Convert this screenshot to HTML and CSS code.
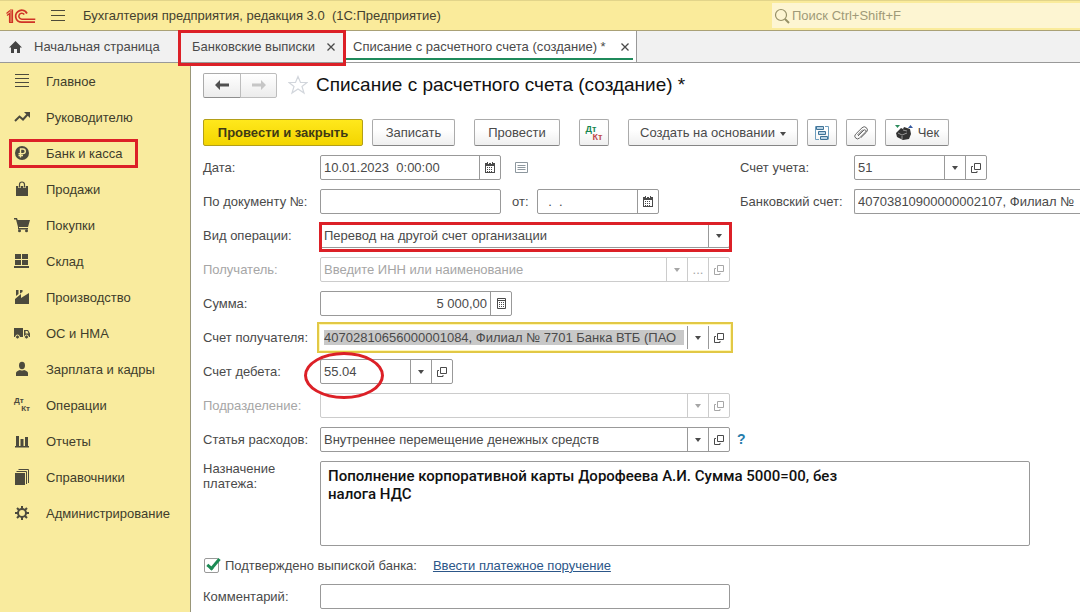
FILE: index.html
```html
<!DOCTYPE html>
<html lang="ru">
<head>
<meta charset="utf-8">
<meta name="viewport" content="width=device-width, initial-scale=1">
<title>Списание с расчетного счета (создание) *</title>
<link rel="stylesheet" href="styles.css">
</head>
<body>
<svg class="sprite" aria-hidden="true">
  <symbol id="arrow" viewBox="0 0 6 4"><path d="M0 0h6L3 4z" fill="currentColor"/></symbol>
  <symbol id="open" viewBox="0 0 10 10"><path d="M3.5.5h6v6h-6zM2 3.500H.5v6h5.500V8" fill="none" stroke="currentColor"/></symbol>
  <symbol id="calendar" viewBox="0 0 10 11"><path d="M0 1h10v10H0z" fill="currentColor"/><path d="M1 4h8v6H1z" fill="#fff"/><path d="M2 0h1v2H2zM7 0h1v2H7z" fill="currentColor"/><path d="M2 5.500h6M2 7.500h6M2 9.500h6" stroke="currentColor" stroke-dasharray="1 1"/><path d="M3.500 0v2M6.500 0v2" stroke="#fff"/></symbol>
  <symbol id="close" viewBox="0 0 8 8"><path d="M.5.5l7 7m0-7l-7 7" stroke="currentColor" stroke-width="1.300"/></symbol>
</svg>

<header class="topbar">
  <svg class="logo" viewBox="0 0 30 16" role="img" aria-label="1С"><g fill="none" stroke="#cf3327"><path d="M.5 5.500L4 2.500M1 7.500l2.500-2V14M4 2h2.500v12.500H3M5 3v11" stroke-width="1.200"/><path d="M21 5.500a6 6 0 1 0-5 8.700h13" stroke-width="1.800"/><path d="M18.300 6.500a3 3 0 1 0-2.500 4.700h13.500" stroke-width="1.500"/></g></svg>
  <button class="plain menu" aria-label="Меню"><svg width="14" height="12" viewBox="0 0 14 12"><path d="M0 .5h14M0 5.500h14M0 10.500h14" stroke="#4d4a39"/></svg></button>
  <span class="app-name">Бухгалтерия предприятия, редакция 3.0&nbsp; (1С:Предприятие)</span>
  <label class="search">
    <svg width="16" height="16" viewBox="0 0 16 16"><circle cx="7" cy="7" r="5.500" fill="none" stroke="#969067" stroke-width="1.200"/><path d="M11 11l4 4" stroke="#969067" stroke-width="2"/></svg>
    <input type="search" placeholder="Поиск Ctrl+Shift+F" aria-label="Поиск">
  </label>
</header>

<nav class="tabs" aria-label="Открытые окна">
  <a class="tab home" href="#"><svg width="13" height="12" viewBox="0 0 13 12"><path d="M6.500 0L13 6.500h-2V12H8V8H5v4H2V6.500H0z" fill="#444"/></svg>Начальная страница</a>
  <div class="tab marked"><a href="#">Банковские выписки</a><button class="plain" aria-label="Закрыть"><svg width="8" height="8"><use href="#close"/></svg></button></div>
  <div class="tab active"><a href="#">Списание с расчетного счета (создание) *</a><button class="plain" aria-label="Закрыть"><svg width="8" height="8"><use href="#close"/></svg></button></div>
</nav>

<div class="workspace">
  <nav class="sidebar" aria-label="Разделы">
    <a href="#"><svg viewBox="0 0 16 16"><path d="M1 1.500h14M1 5.500h14M1 9.500h14M1 13.500h14" stroke="currentColor"/></svg>Главное</a>
    <a href="#"><svg viewBox="0 0 16 16"><path d="M1 12l4.500-4.500 3.500 3L14 5" fill="none" stroke="currentColor" stroke-width="2"/><path d="M10 3h6v6z" fill="currentColor"/></svg>Руководителю</a>
    <a href="#" class="marked"><svg viewBox="0 0 16 16"><circle cx="8" cy="8" r="7" fill="currentColor"/><path d="M6.500 12.500V4h2.500a2.300 2.300 0 0 1 0 4.600H4.500M4.500 10.500H9" fill="none" stroke="#f9eb9e" stroke-width="1.400"/></svg>Банк и касса</a>
    <a href="#"><svg viewBox="0 0 16 16"><path d="M2 5h12v10H2z" fill="currentColor"/><path d="M5.500 7V3.500a2.500 2.500 0 0 1 5 0V7" fill="none" stroke="#f9eb9e" stroke-width="2.500"/><path d="M5.500 6.500v-3a2.500 2.500 0 0 1 5 0v3" fill="none" stroke="currentColor" stroke-width="1.200"/></svg>Продажи</a>
    <a href="#"><svg viewBox="0 0 16 16"><path d="M0 1h3l.7 2H16l-2 7H5v1h9v1.500H4V10L2 2.500H0z" fill="currentColor"/><circle cx="5.500" cy="13.700" r="1.500" fill="currentColor"/><circle cx="12.500" cy="13.700" r="1.500" fill="currentColor"/></svg>Покупки</a>
    <a href="#"><svg viewBox="0 0 16 16"><path d="M1 1h6v5H1zM8 1h6v5H8zM1 7h6v5H1zM8 7h6v5H8zM0 13h15v2H0z" fill="currentColor"/></svg>Склад</a>
    <a href="#"><svg viewBox="0 0 16 16"><path d="M1 15V10l6-5v4l8-5v11zM2 1h2.500v4L2 7zM6 1h2.500v2L6 4.500z" fill="currentColor"/></svg>Производство</a>
    <a href="#"><svg viewBox="0 0 16 16"><path d="M0 3h9v9H0zM10 5h4l2 3.500V12h-6z" fill="currentColor"/><path d="M11.500 6h2l1 2.500h-3z" fill="#f9eb9e"/><g fill="currentColor" stroke="#f9eb9e"><circle cx="3.500" cy="12" r="2"/><circle cx="12.500" cy="12" r="2"/></g></svg>ОС и НМА</a>
    <a href="#"><svg viewBox="0 0 16 16"><ellipse cx="8" cy="4.500" rx="3" ry="3.700" fill="currentColor"/><path d="M2 15v-3c0-1.500 2-2.500 4-3q2 1.200 4 0c2 .5 4 1.500 4 3v3z" fill="currentColor"/></svg>Зарплата и кадры</a>
    <a href="#"><span class="dtkt" aria-hidden="true"><b>Дт</b><b>Кт</b></span>Операции</a>
    <a href="#"><svg viewBox="0 0 16 16"><path d="M2 3h3v10H2zM6.500 6h3v7h-3zM11 4h3v9h-3zM1 13h14v1.500H1z" fill="currentColor"/></svg>Отчеты</a>
    <a href="#"><svg viewBox="0 0 16 16"><path d="M1 4h10v12H1z" fill="currentColor"/><path d="M2.500 2.500h10V15M4.500.5h10V14" fill="none" stroke="currentColor"/></svg>Справочники</a>
    <a href="#"><svg viewBox="0 0 16 16"><circle cx="8" cy="8" r="4" fill="none" stroke="currentColor" stroke-width="2"/><path d="M8 1v3M8 12v3M1 8h3M12 8h3M3 3l2 2M11 11l2 2M13 3l-2 2M5 11l-2 2" stroke="currentColor" stroke-width="2"/></svg>Администрирование</a>
  </nav>

  <main class="content">
    <div class="heading">
      <div class="history">
        <button aria-label="Назад"><svg width="14" height="10" viewBox="0 0 14 10"><path d="M5 0v3.500h9v3H5V10L0 5z" fill="#505050"/></svg></button><button aria-label="Вперед" disabled><svg width="14" height="10" viewBox="0 0 14 10"><path d="M9 0v3.500H0v3h9V10l5-5z" fill="#c6c6c6"/></svg></button>
      </div>
      <button class="plain" aria-label="В избранное"><svg width="20" height="20" viewBox="0 0 20 20"><path d="M10 1.500l2.500 6H19l-5 4 2 6.500-6-4-6 4 2-6.500-5-4h6.500z" fill="none" stroke="#d2d6dc" stroke-width="1.200"/></svg></button>
      <h1>Списание с расчетного счета (создание) *</h1>
    </div>

    <div class="toolbar">
      <div class="group">
        <button class="btn primary">Провести и закрыть</button>
        <button class="btn save">Записать</button>
      </div>
      <button class="btn post">Провести</button>
      <button class="btn icon" aria-label="Показать проводки"><span class="dtkt colored"><b>Дт</b><b>Кт</b></span></button>
      <div class="group">
        <button class="btn create">Создать на основании<svg width="6" height="4"><use href="#arrow"/></svg></button>
        <button class="btn icon" aria-label="Структура подчиненности"><svg width="16" height="16" viewBox="0 0 16 16"><path d="M5 1.500H1.500v13H5M11 1.500h3.500v13" fill="none" stroke="#6d9dbd"/><g fill="#b9d3e5" stroke="#3f7296"><path d="M2.500 1.500h7v3h-7zM4.500 6.500h7v3h-7zM6.500 11.500h7v3h-7z"/></g></svg></button>
        <button class="btn icon" aria-label="Присоединенные файлы"><svg width="14" height="14" viewBox="0 0 14 14"><path d="M4 10l6-6a1.300 1.300 0 0 1 1.800 1.800L5.500 12A2.700 2.700 0 0 1 1.600 8.200L8 1.800a3 3 0 0 1 4.500 4.300L7 11.500M3.500 9L9 3.500" fill="none" stroke="#666"/></svg></button>
        <button class="btn check"><svg width="18" height="16" viewBox="0 0 18 16"><path d="M0 0h5L2.500 3z" fill="#2c8b5c"/><path d="M13 3h5l-2.500-3z" fill="#33579e"/><path d="M1 8l5-5 2 1 1-2 6 2 1 5-2 5-6 1-6-3z" fill="#333"/><path d="M3 8l4 2 5-2M8 5l4 1M7 11v3" fill="none" stroke="#999"/></svg>Чек</button>
      </div>
    </div>

    <form class="form">
      <div class="row">
        <div class="left">
          <label class="label" for="date">Дата:</label>
          <div class="field w-date"><input id="date" value="10.01.2023&nbsp; 0:00:00"><button type="button" aria-label="Календарь"><svg width="10" height="11"><use href="#calendar"/></svg></button></div>
          <button type="button" class="plain note" aria-label="Список"><svg width="13" height="11" viewBox="0 0 13 11"><path d="M.5.5h12v10H.5zM2.500 3.500h8M2.500 5.500h8M2.500 7.500h8" fill="none" stroke="#8d979e"/></svg></button>
        </div>
        <div class="right">
          <label class="label" for="account">Счет учета:</label>
          <div class="field w-code"><input id="account" value="51"><button type="button" aria-label="Выбрать"><svg width="6" height="4"><use href="#arrow"/></svg></button><button type="button" aria-label="Открыть"><svg width="10" height="10"><use href="#open"/></svg></button></div>
        </div>
      </div>
      <div class="row">
        <div class="left">
          <label class="label" for="number">По документу №:</label>
          <div class="field w-date"><input id="number"></div>
          <label class="from" for="docdate">от:</label>
          <div class="field w-from"><input id="docdate" value="&nbsp;&nbsp;.&nbsp;&nbsp;."><button type="button" aria-label="Календарь"><svg width="10" height="11"><use href="#calendar"/></svg></button></div>
        </div>
        <div class="right">
          <label class="label" for="bank">Банковский счет:</label>
          <div class="field bleed"><input id="bank" value="40703810900000002107, Филиал №"></div>
        </div>
      </div>
      <div class="row">
        <label class="label" for="kind">Вид операции:</label>
        <div class="field w-full marked"><select id="kind"><option>Перевод на другой счет организации</option></select><span class="seg" aria-hidden="true"><svg width="6" height="4"><use href="#arrow"/></svg></span></div>
      </div>
      <div class="row off">
        <label class="label" for="payee">Получатель:</label>
        <div class="field w-full"><input id="payee" placeholder="Введите ИНН или наименование" disabled><button type="button" aria-label="Выбрать" disabled><svg width="6" height="4"><use href="#arrow"/></svg></button><button type="button" disabled>...</button><button type="button" aria-label="Открыть" disabled><svg width="10" height="10"><use href="#open"/></svg></button></div>
      </div>
      <div class="row">
        <label class="label" for="sum">Сумма:</label>
        <div class="field w-sum"><input id="sum" value="5 000,00"><button type="button" aria-label="Калькулятор"><svg width="9" height="11" viewBox="0 0 9 11"><path d="M.5.5h8v10h-8zM0 2.500h9" fill="none" stroke="currentColor"/><path d="M2 4.500h5M2 6.500h5M2 8.500h5" stroke="currentColor" stroke-dasharray="1 1"/></svg></button></div>
      </div>
      <div class="row">
        <label class="label" for="payeeacc">Счет получателя:</label>
        <div class="field w-full focused"><input id="payeeacc" value="40702810656000001084, Филиал № 7701 Банка ВТБ (ПАО"><button type="button" aria-label="Выбрать"><svg width="6" height="4"><use href="#arrow"/></svg></button><button type="button" aria-label="Открыть"><svg width="10" height="10"><use href="#open"/></svg></button></div>
      </div>
      <div class="row">
        <label class="label" for="debit">Счет дебета:</label>
        <div class="field w-code circled"><input id="debit" value="55.04"><button type="button" aria-label="Выбрать"><svg width="6" height="4"><use href="#arrow"/></svg></button><button type="button" aria-label="Открыть"><svg width="10" height="10"><use href="#open"/></svg></button></div>
      </div>
      <div class="row off">
        <label class="label" for="unit">Подразделение:</label>
        <div class="field w-full"><input id="unit" disabled><button type="button" aria-label="Выбрать" disabled><svg width="6" height="4"><use href="#arrow"/></svg></button><button type="button" aria-label="Открыть" disabled><svg width="10" height="10"><use href="#open"/></svg></button></div>
      </div>
      <div class="row">
        <label class="label" for="item">Статья расходов:</label>
        <div class="field w-full"><input id="item" value="Внутреннее перемещение денежных средств"><button type="button" aria-label="Выбрать"><svg width="6" height="4"><use href="#arrow"/></svg></button><button type="button" aria-label="Открыть"><svg width="10" height="10"><use href="#open"/></svg></button></div>
        <a class="help" href="#">?</a>
      </div>
      <div class="row top">
        <label class="label" for="purpose">Назначение платежа:</label>
        <textarea id="purpose">Пополнение корпоративной карты Дорофеева А.И. Сумма 5000=00, без
налога НДС</textarea>
      </div>
      <div class="row confirm">
        <input type="checkbox" id="confirmed" checked><label for="confirmed">Подтверждено выпиской банка:</label>
        <a href="#">Ввести платежное поручение</a>
      </div>
      <div class="row">
        <label class="label" for="comment">Комментарий:</label>
        <div class="field w-full"><input id="comment"></div>
      </div>
    </form>
  </main>
</div>
</body>
</html>
```
FILE: styles.css
```css
*, *::before, *::after { box-sizing: border-box; }

body {
  margin: 0;
  height: 100vh;
  display: flex;
  flex-direction: column;
  overflow: hidden;
  background: #fff;
  color: #4a4a4a;
  font: 13px/15px "Liberation Sans", Arial, sans-serif;
}

button, input, select, textarea { font: inherit; color: inherit; margin: 0; }
a { color: inherit; text-decoration: none; }
svg { display: block; flex: none; }
.sprite { position: absolute; width: 0; height: 0; }
.plain { border: 0; padding: 0; background: none; }

/* Top bar */
.topbar {
  flex: none;
  display: flex;
  align-items: center;
  height: 31px;
  padding-left: 6px;
  background: #faeb9b;
  border-top: 1px solid #e2d48a;
  border-bottom: 1px solid #aaa176;
  color: #44412f;
}
.logo { width: 30px; height: 16px; }
.menu { margin: 0 18px 0 15px; }
.search {
  display: flex;
  align-items: center;
  width: 308px;
  height: 25px;
  margin-left: auto;
  padding-left: 2px;
  background: #fdf5d2;
}
.search input { flex: 1; min-width: 0; border: 0; padding: 0 2px; background: none; outline: 0; }
.search input::placeholder { color: #a09a78; opacity: 1; }

/* Window tabs */
.tabs {
  flex: none;
  display: flex;
  height: 32px;
  background: #f1f1f1;
  border-bottom: 1px solid #999;
}
.tab { position: relative; display: flex; align-items: center; gap: 8px; padding: 0 10px; }
.home { gap: 12px; width: 180px; padding: 0 9px; }
.tab.marked { width: 166px; padding: 0 11px 0 12px; justify-content: space-between; }
.tab.active {
  width: 291px;
  padding: 0 7px;
  justify-content: space-between;
  background: #fff;
  border-right: 1px solid #999;
}
.tab.active::after {
  content: "";
  position: absolute;
  left: 0;
  right: 3px;
  bottom: 2px;
  height: 2px;
  background: #1f8a5b;
}

/* Red callouts */
.tab.marked::after,
.sidebar .marked::after,
.field.marked::after,
.circled::after {
  content: "";
  position: absolute;
  border: 3px solid #dc2027;
  pointer-events: none;
  z-index: 1;
}
.tab.marked::after { inset: -1px 0 -4px -2px; }
.sidebar .marked::after { inset: 4px 52px 3px 9px; }
.field.marked::after { inset: -2px -3px -5px -2px; }
.circled::after { left: -17px; top: -8px; width: 80px; height: 47px; border-radius: 50%; }

/* Section list */
.workspace { flex: 1; display: flex; min-height: 0; }
.sidebar {
  flex: none;
  width: 191px;
  background: #f9eb9e;
  border-right: 1px solid #999678;
  color: #403d2c;
}
.sidebar a { position: relative; display: flex; align-items: center; gap: 16px; height: 36px; padding-left: 14px; }
.sidebar svg, .sidebar .dtkt { flex: none; width: 16px; height: 16px; color: #4c4a3d; }
.dtkt { display: flex; flex-direction: column; font-size: 8px; line-height: 8px; text-align: left; }
.dtkt b:last-child { align-self: flex-end; }
.colored { width: 17px; font-size: 9px; }
.colored b:first-child { color: #17864f; }
.colored b:last-child { color: #c0494b; }

/* Document */
.content { flex: 1; min-width: 0; padding: 10px 0 0 12px; }
.heading { display: flex; align-items: center; height: 24px; margin-bottom: 22px; }
.history { display: flex; height: 25px; margin-right: 11px; }
.history button {
  display: flex;
  align-items: center;
  justify-content: center;
  width: 38px;
  padding: 0;
  border: 1px solid #ababab;
  border-bottom-color: #8e8e8e;
  border-radius: 2px 0 0 2px;
  background: linear-gradient(#fff, #ececec);
}
.history button + button { width: 37px; margin-left: -1px; border-color: #bdbdbd; border-radius: 0 2px 2px 0; }
h1 { margin: 0 0 0 8px; font-size: 19px; line-height: 22px; font-weight: 400; color: #111; }

.toolbar { display: flex; gap: 19px; margin-bottom: 9px; }
.group { display: flex; gap: 9px; }
.btn {
  display: flex;
  align-items: center;
  justify-content: center;
  gap: 5px;
  height: 27px;
  padding: 0;
  border: 1px solid #ababab;
  border-bottom-color: #858585;
  border-radius: 2px;
  background: linear-gradient(#fff 40%, #efefef);
  white-space: nowrap;
}
.primary { width: 160px; border-color: #b39f18; background: linear-gradient(#ffe81c, #f3d500); font-weight: 700; color: #3f3a14; }
.save { width: 83px; }
.post { width: 86px; }
.icon { width: 30px; }
.create { width: 170px; }
.create svg { margin-top: 3px; }
.check { width: 64px; }

/* Form */
.form { display: flex; flex-direction: column; gap: 9px; }
.row { display: flex; align-items: center; min-height: 25px; }
.left { flex: none; display: flex; align-items: center; width: 537px; }
.right { flex: 1; min-width: 0; display: flex; align-items: center; }
.label { flex: none; width: 117px; white-space: nowrap; }
.right .label { width: 114px; }
.field {
  position: relative;
  flex: none;
  display: flex;
  height: 25px;
  border: 1px solid #999;
  border-radius: 2px;
  background: #fff;
}
.field input, .field select {
  flex: 1;
  min-width: 0;
  width: 0;
  padding: 0 3px;
  border: 0;
  background: none;
  outline: 0;
  appearance: none;
}
.field button, .seg {
  display: flex;
  flex: none;
  align-items: center;
  justify-content: center;
  width: 21px;
  padding: 0;
  border: 0;
  border-left: 1px solid #999;
  background: none;
}
.w-date { width: 181px; }
.w-code { width: 133px; }
.w-from { width: 122px; }
.w-sum { width: 192px; }
.w-sum input { text-align: right; }
.w-full { width: 410px; }
.bleed { flex: 1; min-width: 0; border-right: 0; border-radius: 2px 0 0 2px; }
.note { margin-left: 14px; }
.from { width: 36px; padding-left: 11px; }
.off { color: #a6a6a6; }
.off .field, .off .field button { border-color: #ccc; color: #a6a6a6; }
.off input::placeholder { color: #a6a6a6; opacity: 1; }
.focused { border-color: transparent; border-radius: 0; outline: 2px solid #e2c845; outline-offset: 1px; box-shadow: 0 0 0 1px #fff7b8; }
.focused input { margin: 4px 3px; padding: 0; background: #c8c8c8; }
.help { margin-left: 7px; font-size: 14px; font-weight: 700; color: #267cab; }

.top { align-items: flex-start; }
.top .label { width: 117px; padding-right: 20px; white-space: normal; }
textarea {
  display: block;
  flex: 0 1 710px;
  height: 85px;
  padding: 5px 7px;
  border: 1px solid #999;
  border-radius: 2px;
  outline: 0;
  resize: none;
  color: #111;
  font: 500 15px/18px Roboto, sans-serif;
}
.row.confirm { min-height: 20px; }
.confirm input {
  appearance: none;
  position: relative;
  width: 15px;
  height: 15px;
  margin: 0 6px 0 1px;
  border: 1px solid #999;
  border-radius: 2px;
}
.confirm input:checked::after {
  content: "";
  position: absolute;
  left: 5px;
  top: -3px;
  width: 7px;
  height: 14px;
  border: solid #1c8a54;
  border-width: 0 3px 3px 0;
  transform: rotate(40deg);
}
.confirm a { margin-left: 16px; color: #2c5688; text-decoration: underline; }
```
